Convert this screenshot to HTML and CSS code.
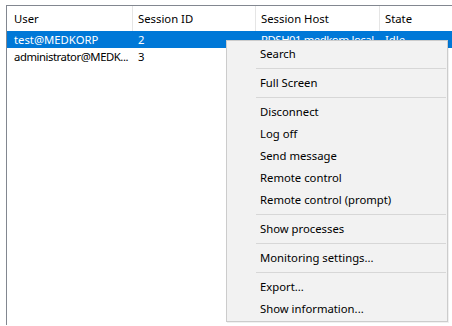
FILE: index.html
```html
<!DOCTYPE html>
<html>
<head>
<meta charset="utf-8">
<link rel="stylesheet" href="styles.css">
</head>
<body>
<div class="frame">
  <div class="row header">
    <div class="cell c1">User</div>
    <div class="cell c2">Session ID</div>
    <div class="cell c3">Session Host</div>
    <div class="cell c4">State</div>
  </div>
  <div class="row data selected">
    <div class="cell c1">test@MEDKORP</div>
    <div class="cell c2">2</div>
    <div class="cell c3 tight">RDSH01.medkorp.local</div>
    <div class="cell c4">Idle</div>
  </div>
  <div class="row data">
    <div class="cell c1 tight">administrator@MEDK...</div>
    <div class="cell c2">3</div>
    <div class="cell c3"></div>
    <div class="cell c4"></div>
  </div>
</div>
<div class="menu">
  <div class="item">Search</div>
  <div class="sep"></div>
  <div class="item">Full Screen</div>
  <div class="sep"></div>
  <div class="item">Disconnect</div>
  <div class="item">Log off</div>
  <div class="item">Send message</div>
  <div class="item">Remote control</div>
  <div class="item">Remote control (prompt)</div>
  <div class="sep"></div>
  <div class="item">Show processes</div>
  <div class="sep"></div>
  <div class="item">Monitoring settings...</div>
  <div class="sep"></div>
  <div class="item">Export...</div>
  <div class="item">Show information...</div>
</div>
</body>
</html>
```
FILE: styles.css
```css
html, body {
  margin: 0;
  padding: 0;
  background: #ffffff;
  width: 452px;
  height: 326px;
  overflow: hidden;
  font-family: "Noto Sans", "Open Sans", sans-serif;
  font-size: 11.3px;
  color: #000;
}
.frame {
  margin: 5px 0 0 6px;
  border-top: 1px solid #828790;
  border-left: 1px solid #828790;
  height: 320px;
  box-sizing: border-box;
}
.row {
  display: grid;
  grid-template-columns: 126px 123px 124px 1fr;
  white-space: nowrap;
}
.cell {
  overflow: hidden;
  padding-left: 5px;
  box-sizing: border-box;
}
.cell.c1 { padding-left: 7px; }
.cell.tight { letter-spacing: -0.45px; }
.header {
  height: 25px;
}
.header .cell {
  line-height: 25px;
  border-right: 1px solid #e5e5e5;
}
.header .cell.c4 { border-right: none; }
.data {
  height: 17px;
}
.data .cell {
  line-height: 17px;
}
.selected {
  background: #0078d7;
  color: #fff;
}
.menu {
  position: absolute;
  left: 226px;
  top: 40px;
  width: 222px;
  box-sizing: border-box;
  background: #f2f2f2;
  border: 1px solid #cccccc;
  padding: 2px 0 1px;
  box-shadow: 1px 1px 0 rgba(0,0,0,0.06);
}
.item {
  height: 22px;
  line-height: 22px;
  padding-left: 33px;
  white-space: nowrap;
}
.sep {
  height: 1px;
  background: #d7d7d7;
  margin: 3px 1px 3px 29px;
}
```
